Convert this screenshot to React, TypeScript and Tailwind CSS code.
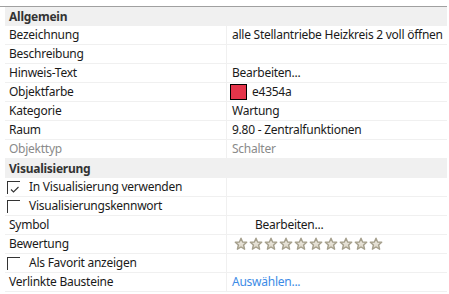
import React from 'react';

type Row =
  | { kind: 'header'; label: string }
  | { kind: 'prop'; label: string; value?: React.ReactNode; muted?: boolean }
  | { kind: 'check'; label: string; checked: boolean };

const Star: React.FC = () => (
  <svg width="14" height="14" viewBox="0 0 14 14" className="shrink-0">
    <defs>
      <linearGradient id="sg" x1="0" y1="0" x2="0" y2="1">
        <stop offset="0" stopColor="#f4f1ea" />
        <stop offset="1" stopColor="#d6d0c0" />
      </linearGradient>
    </defs>
    <path
      d="M7 1.2 L8.6 5 L12.7 5.3 L9.6 8 L10.6 12.2 L7 10 L3.4 12.2 L4.4 8 L1.3 5.3 L5.4 5 Z"
      fill="url(#sg)"
      stroke="#a59f8c"
      strokeWidth="1.4"
      strokeLinejoin="round"
    />
  </svg>
);

const Checkbox: React.FC<{ checked: boolean }> = ({ checked }) => (
  <div className="relative w-[13px] h-[13px] shrink-0 border-t border-l border-[#333333]">
    {checked && (
      <svg width="10" height="8" viewBox="0 0 10 8" className="absolute left-[2px] top-[4px]">
        <path d="M1 3.5 L3.5 6 L8.5 1" fill="none" stroke="#333333" strokeWidth="1.1" />
      </svg>
    )}
  </div>
);

const rows: Row[] = [
  { kind: 'header', label: 'Allgemein' },
  { kind: 'prop', label: 'Bezeichnung', value: 'alle Stellantriebe Heizkreis 2 voll öffnen' },
  { kind: 'prop', label: 'Beschreibung' },
  { kind: 'prop', label: 'Hinweis-Text', value: 'Bearbeiten...' },
  {
    kind: 'prop',
    label: 'Objektfarbe',
    value: (
      <div className="flex items-center">
        <div className="w-[17px] h-[16px] ml-[-2px] border border-black bg-[#e4354a]" />
        <span className="ml-[5px]">e4354a</span>
      </div>
    ),
  },
  { kind: 'prop', label: 'Kategorie', value: 'Wartung' },
  { kind: 'prop', label: 'Raum', value: '9.80 - Zentralfunktionen' },
  { kind: 'prop', label: 'Objekttyp', value: 'Schalter', muted: true },
  { kind: 'header', label: 'Visualisierung' },
  { kind: 'check', label: 'In Visualisierung verwenden', checked: true },
  { kind: 'check', label: 'Visualisierungskennwort', checked: false },
  { kind: 'prop', label: 'Symbol', value: <span className="ml-[23px]">Bearbeiten...</span> },
  {
    kind: 'prop',
    label: 'Bewertung',
    value: (
      <div className="flex gap-[1px] ml-[2px]">
        {Array.from({ length: 10 }).map((_, i) => (
          <Star key={i} />
        ))}
      </div>
    ),
  },
  { kind: 'check', label: 'Als Favorit anzeigen', checked: false },
  { kind: 'prop', label: 'Verlinkte Bausteine', value: <span className="text-[#3c8be6]">Auswählen...</span> },
];

export default function App() {
  return (
    <div className="w-[449px] h-[294px] bg-white text-[12px] tracking-[-0.25px] text-[#1a1a1a] overflow-hidden" style={{ fontFamily: '"Noto Sans", "Segoe UI", sans-serif' }}>
      <div className="h-[6px]" />
      <div className="w-[447px] border-t border-[#a0a0a0]">
        <div className="ml-[5px] w-[442px]">
          {rows.map((row, i) => {
            if (row.kind === 'header') {
              return (
                <div key={i} className="h-[19px] flex items-center bg-[#f0f0f0] pl-[4px] font-bold text-[#333333]">
                  {row.label}
                </div>
              );
            }
            if (row.kind === 'check') {
              return (
                <div key={i} className="h-[19px] flex border-b border-[#f0f0f0]">
                  <div className="w-[222px] flex items-center pl-[2px] border-r border-[#f0f0f0]">
                    <Checkbox checked={row.checked} />
                    <span className="ml-[9px] leading-none">{row.label}</span>
                  </div>
                  <div className="flex-1" />
                </div>
              );
            }
            return (
              <div key={i} className="h-[19px] flex border-b border-[#f0f0f0]">
                <div className={`w-[222px] flex items-center pl-[4px] border-r border-[#f0f0f0] ${row.muted ? 'text-[#8a8a8a]' : ''}`}>
                  {row.label}
                </div>
                <div className={`flex-1 flex items-center pl-[5px] whitespace-nowrap ${row.muted ? 'text-[#8a8a8a]' : ''}`}>
                  {row.value}
                </div>
              </div>
            );
          })}
        </div>
      </div>
    </div>
  );
}
